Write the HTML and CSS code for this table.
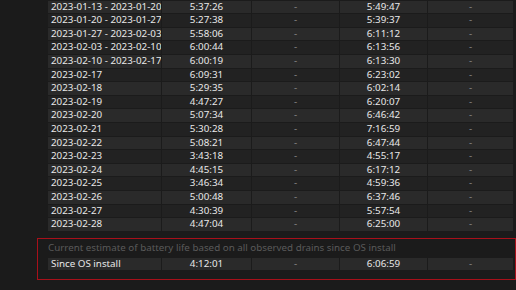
FILE: index.html
```html
<!DOCTYPE html>
<html>
<head>
<meta charset="utf-8">
<link rel="stylesheet" href="styles.css">
</head>
<body>
<div class="page">
  <div class="table">
    <div class="row"><div class="c first">2023-01-13 - 2023-01-20</div><div class="c">5:37:26</div><div class="c dim">-</div><div class="c">5:49:47</div><div class="c dim">-</div></div>
    <div class="row"><div class="c first">2023-01-20 - 2023-01-27</div><div class="c">5:27:38</div><div class="c dim">-</div><div class="c">5:39:37</div><div class="c dim">-</div></div>
    <div class="row"><div class="c first">2023-01-27 - 2023-02-03</div><div class="c">5:58:06</div><div class="c dim">-</div><div class="c">6:11:12</div><div class="c dim">-</div></div>
    <div class="row"><div class="c first">2023-02-03 - 2023-02-10</div><div class="c">6:00:44</div><div class="c dim">-</div><div class="c">6:13:56</div><div class="c dim">-</div></div>
    <div class="row"><div class="c first">2023-02-10 - 2023-02-17</div><div class="c">6:00:19</div><div class="c dim">-</div><div class="c">6:13:30</div><div class="c dim">-</div></div>
    <div class="row"><div class="c first">2023-02-17</div><div class="c">6:09:31</div><div class="c dim">-</div><div class="c">6:23:02</div><div class="c dim">-</div></div>
    <div class="row"><div class="c first">2023-02-18</div><div class="c">5:29:35</div><div class="c dim">-</div><div class="c">6:02:14</div><div class="c dim">-</div></div>
    <div class="row"><div class="c first">2023-02-19</div><div class="c">4:47:27</div><div class="c dim">-</div><div class="c">6:20:07</div><div class="c dim">-</div></div>
    <div class="row"><div class="c first">2023-02-20</div><div class="c">5:07:34</div><div class="c dim">-</div><div class="c">6:46:42</div><div class="c dim">-</div></div>
    <div class="row"><div class="c first">2023-02-21</div><div class="c">5:30:28</div><div class="c dim">-</div><div class="c">7:16:59</div><div class="c dim">-</div></div>
    <div class="row"><div class="c first">2023-02-22</div><div class="c">5:08:21</div><div class="c dim">-</div><div class="c">6:47:44</div><div class="c dim">-</div></div>
    <div class="row"><div class="c first">2023-02-23</div><div class="c">3:43:18</div><div class="c dim">-</div><div class="c">4:55:17</div><div class="c dim">-</div></div>
    <div class="row"><div class="c first">2023-02-24</div><div class="c">4:45:15</div><div class="c dim">-</div><div class="c">6:17:12</div><div class="c dim">-</div></div>
    <div class="row"><div class="c first">2023-02-25</div><div class="c">3:46:34</div><div class="c dim">-</div><div class="c">4:59:36</div><div class="c dim">-</div></div>
    <div class="row"><div class="c first">2023-02-26</div><div class="c">5:00:48</div><div class="c dim">-</div><div class="c">6:37:46</div><div class="c dim">-</div></div>
    <div class="row"><div class="c first">2023-02-27</div><div class="c">4:30:39</div><div class="c dim">-</div><div class="c">5:57:54</div><div class="c dim">-</div></div>
    <div class="row"><div class="c first">2023-02-28</div><div class="c">4:47:04</div><div class="c dim">-</div><div class="c">6:25:00</div><div class="c dim">-</div></div>
  </div>
  <div class="estimate">
    <div class="caption">Current estimate of battery life based on all observed drains since OS install</div>
    <div class="row single"><div class="c first">Since OS install</div><div class="c">4:12:01</div><div class="c dim">-</div><div class="c">6:06:59</div><div class="c dim">-</div></div>
  </div>
</div>
</body>
</html>
```

FILE: styles.css
```css
html, body {
  margin: 0;
  padding: 0;
  background: #1b1b1b;
  overflow: hidden;
}
body {
  width: 516px;
  height: 290px;
  font-family: "Noto Sans", "Open Sans", sans-serif;
  font-size: 9.8px;
  color: #e8e8e8;
}
.table {
  display: flex;
  flex-direction: column;
  gap: 1px;
  margin-left: 48px;
  height: 231px;
  padding-top: 0.7px;
  box-sizing: border-box;
}
.row {
  display: grid;
  grid-template-columns: 113px 89px 87px 87px 85px;
  column-gap: 1px;
  height: 12.6px;
  line-height: 12.6px;
  flex: none;
}
.row:nth-child(odd) .c {
  background: #2a2a2a;
}
.row:nth-child(even) .c {
  background: #222222;
}
.c {
  text-align: center;
  white-space: nowrap;
  overflow: hidden;
}
.c.first {
  text-align: left;
  padding-left: 3px;
}
.c.dim {
  color: #8a8a8a;
}
.estimate {
  margin-top: 7px;
  margin-left: 37px;
  width: 479px;
  height: 42px;
  border: 1px solid #a8101a;
  padding: 2px 0 0 10px;
  box-sizing: border-box;
}
.caption {
  color: #5a5a5a;
  height: 14px;
  line-height: 14px;
  white-space: nowrap;
  overflow: hidden;
}
.estimate .row {
  margin-top: 3px;
  height: 12px;
  line-height: 12px;
}
.estimate .row .c {
  background: #2a2a2a;
}
```
